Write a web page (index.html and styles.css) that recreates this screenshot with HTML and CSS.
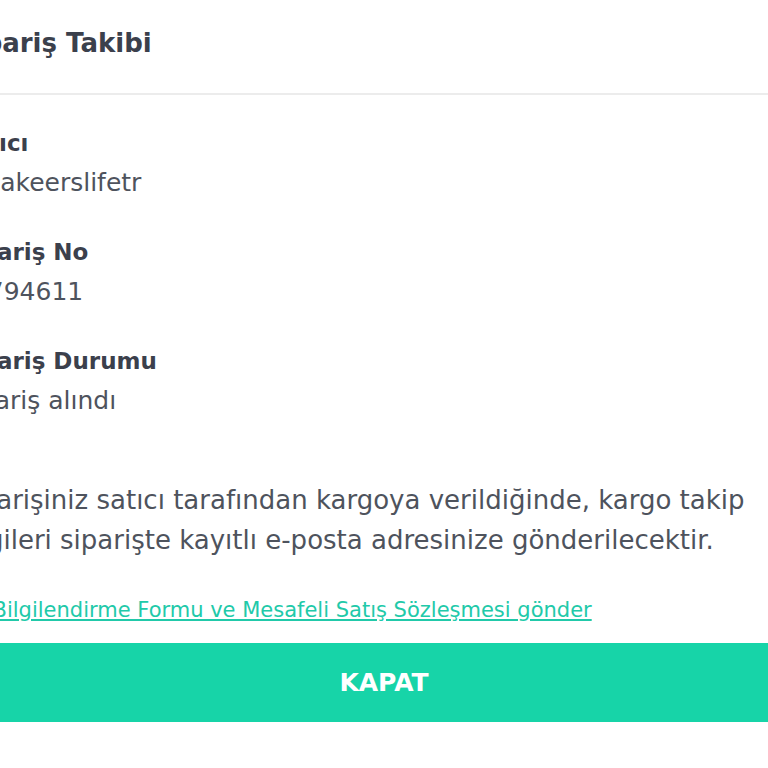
FILE: index.html
```html
<!DOCTYPE html>
<html lang="tr">
<head>
    <meta charset="UTF-8">
    <meta name="viewport" content="width=device-width, initial-scale=1.0">
    <title>Sipariş Takibi</title>
    <link rel="stylesheet" href="styles.css">
</head>
<body>
    <div class="modal">
        <div class="modal-header">
            <h2>Sipariş Takibi</h2>
        </div>
        <div class="modal-body">
            <div class="info-row">
                <div class="info-label">Satıcı</div>
                <div class="info-value">sneakeerslifetr</div>
            </div>
            <div class="info-row">
                <div class="info-label">Sipariş No</div>
                <div class="info-value">18794611</div>
            </div>
            <div class="info-row">
                <div class="info-label">Sipariş Durumu</div>
                <div class="info-value">Sipariş alındı</div>
            </div>

            <p class="info-note">Siparişiniz satıcı tarafından kargoya verildiğinde, kargo takip bilgileri siparişte kayıtlı e-posta adresinize gönderilecektir.</p>

            <a class="form-link" href="#">Ön Bilgilendirme Formu ve Mesafeli Satış Sözleşmesi gönder</a>
        </div>
        <button class="close-button">KAPAT</button>
    </div>
</body>
</html>
```

FILE: styles.css
```css
/* Page */
body {
    margin: 0;
    background: #fff;
    font-family: "DejaVu Sans", "Open Sans", sans-serif;
    color: #3b404c;
    overflow: hidden;
}

.modal {
    margin-left: -44px;
    width: 856px;
}

/* Header */
.modal-header {
    height: 95px;
    display: flex;
    align-items: center;
    padding-bottom: 8px;
    box-sizing: border-box;
    border-bottom: 2px solid #ececec;
}

.modal-header h2 {
    margin: 0;
    font-size: 26px;
    font-weight: 700;
}

/* Body */
.modal-body {
    padding-top: 28px;
    width: 800px;
}

.info-row {
    margin-bottom: 29px;
}

.info-label {
    font-size: 23px;
    font-weight: 700;
    line-height: 40px;
}

.info-value {
    font-size: 25px;
    line-height: 40px;
    color: #4e535d;
}

.info-note {
    margin: 59px 0 0;
    font-size: 26px;
    line-height: 40px;
    color: #4e535d;
}

.form-link {
    display: block;
    margin-top: 35px;
    font-size: 21px;
    line-height: 30px;
    color: #21c9a9;
    text-decoration: underline;
}

/* Button */
.close-button {
    display: block;
    width: 100%;
    height: 79px;
    margin-top: 18px;
    border: none;
    background-color: #17d4a8;
    color: #fff;
    font-family: inherit;
    font-size: 25px;
    font-weight: 700;
    cursor: pointer;
}
```
